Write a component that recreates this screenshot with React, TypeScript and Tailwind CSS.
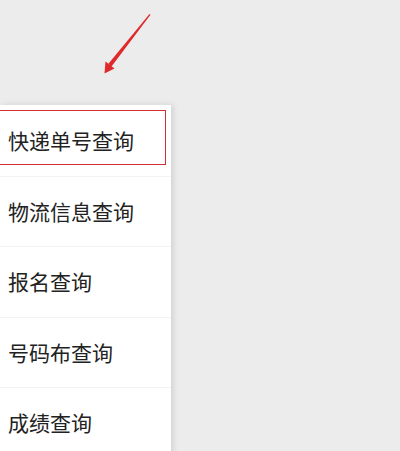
const items = ["快递单号查询", "物流信息查询", "报名查询", "号码布查询", "成绩查询"];

export default function App() {
  return (
    <div className="relative h-[451px] w-[400px] overflow-hidden bg-[#ececec]">
      <svg className="absolute left-0 top-0" width="400" height="100" viewBox="0 0 400 100">
        <polygon points="149.5,14 150.5,14.8 111.5,66.5 108.2,64" fill="#df2a2c" />
        <polygon points="104.5,73.5 105.5,61.5 114.5,68.5" fill="#df2a2c" />
      </svg>
      <div className="mt-[105px] w-[171px] bg-white shadow-[2px_0_6px_rgba(0,0,0,0.12)]">
        {items.map((t, i) => (
          <div
            key={t}
            className={`relative flex h-[70.5px] items-center pl-2 ${i > 0 ? "border-t border-[#f3f3f3]" : ""}`}
          >
            <span className="text-[21px] leading-none text-[#222] [font-family:'Noto_Sans_CJK_SC',sans-serif]">
              {t}
            </span>
            {i === 0 && (
              <div className="absolute -left-1 top-[5px] bottom-[11px] right-[5px] border-[1.5px] border-[#d23034]" />
            )}
          </div>
        ))}
      </div>
    </div>
  );
}
